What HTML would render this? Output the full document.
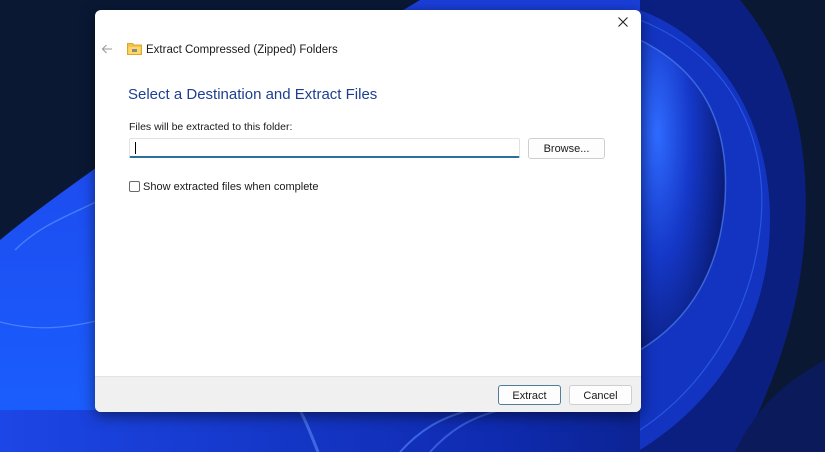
<!DOCTYPE html>
<html><head><meta charset="utf-8"><style>
html,body{margin:0;padding:0;width:825px;height:452px;overflow:hidden;font-family:"Liberation Sans",sans-serif;}
body{background:#0a1834;position:relative;}
#bg{position:absolute;left:0;top:0;}
.dlg{position:absolute;left:95px;top:10px;width:546px;height:402px;background:#fff;border-radius:6px;overflow:hidden;box-shadow:0 4px 14px rgba(0,0,0,.5);}
.foot{position:absolute;left:0;right:0;bottom:0;height:35px;background:#f0f0f0;border-top:1px solid #e3e3e3;}
.btn{position:absolute;height:20px;border:1px solid #cfcfcf;border-radius:3px;background:#fdfdfd;font-size:11px;color:#1a1a1a;text-align:center;line-height:20px;box-sizing:border-box;}
.t{position:absolute;white-space:nowrap;}
</style></head><body>
<svg id="bg" width="825" height="452" viewBox="0 0 825 452">
<defs>
<radialGradient id="gr" cx="0.2" cy="0.3" r="0.8"><stop offset="0" stop-color="#2f6bff"/><stop offset="0.5" stop-color="#1538c8"/><stop offset="1" stop-color="#0a1c78"/></radialGradient>
<linearGradient id="gl" x1="0" y1="0" x2="0" y2="1"><stop offset="0" stop-color="#1d4cf0"/><stop offset="1" stop-color="#1a60ff"/></linearGradient>
<linearGradient id="gb" x1="0" y1="0" x2="1" y2="0"><stop offset="0" stop-color="#1c46e6"/><stop offset="0.6" stop-color="#0f2bb0"/><stop offset="1" stop-color="#081a70"/></linearGradient>
</defs>
<rect width="825" height="452" fill="#0a1834"/>
<path d="M420 0 L825 0 L825 12 L400 12 Z" fill="#1a3ed8"/>
<path d="M0 240 C30 215 65 190 100 165 L100 452 L0 452 Z" fill="url(#gl)"/>
<path d="M15 250 C40 225 70 215 100 200" stroke="#5a8cff" stroke-width="1.5" fill="none" opacity=".7"/>
<path d="M0 322 C30 330 60 330 100 320" stroke="#6a9aff" stroke-width="1.2" fill="none" opacity=".6"/>
<rect x="0" y="410" width="825" height="42" fill="url(#gb)"/>
<path d="M300 410 C310 430 315 445 318 452" stroke="#6a9aff" stroke-width="3" fill="none" opacity=".5"/>
<path d="M400 452 C420 430 440 418 470 410" stroke="#5a8aff" stroke-width="2" fill="none" opacity=".6"/>
<path d="M430 452 C450 430 470 418 500 410" stroke="#5a8aff" stroke-width="2" fill="none" opacity=".5"/>
<rect x="640" y="0" width="185" height="452" fill="#0a1834"/>
<path d="M640 0 L740 0 C790 60 810 140 805 230 C800 320 770 390 740 452 L640 452 Z" fill="#0b1f80"/>
<path d="M640 10 C720 40 770 120 770 220 C770 320 720 400 640 450 Z" fill="#1234c0"/>
<path d="M640 40 C700 70 730 120 725 200 C720 270 690 320 640 350 Z" fill="url(#gr)"/>
<path d="M640 40 C700 70 730 120 725 200 C720 270 690 320 640 350" stroke="#5a8cff" stroke-width="1.5" fill="none" opacity=".6"/>
<path d="M640 20 C740 60 770 150 760 230 C750 320 700 390 640 430" stroke="#3a6aff" stroke-width="1.2" fill="none" opacity=".6"/>
<path d="M735 452 C760 400 790 380 825 360 L825 452 Z" fill="#0a1a5a"/>
</svg>
<div class="dlg">
  <svg style="position:absolute;left:523px;top:7px" width="10" height="10" viewBox="0 0 10 10"><path d="M0.5 0.5 L9.5 9.5 M9.5 0.5 L0.5 9.5" stroke="#222" stroke-width="1.1"/></svg>
  <svg style="position:absolute;left:6px;top:34px" width="12" height="10" viewBox="0 0 12 10"><path d="M11 5 H1.5 M5.5 1 L1.5 5 L5.5 9" stroke="#9a9a9a" stroke-width="1.1" fill="none"/></svg>
  <svg style="position:absolute;left:32px;top:32px" width="15" height="13" viewBox="0 0 15 13"><path d="M0.5 1.5 H5.5 L7 3 H14.5 V12.5 H0.5 Z" fill="#f2c34a" stroke="#d9a72a"/><rect x="1.5" y="5" width="12" height="7" fill="#ffd866"/><rect x="5" y="7" width="5" height="3" fill="#8a8a8a"/></svg>
  <div class="t" style="left:51px;top:34px;font-size:11.5px;color:#1a1a1a">Extract Compressed (Zipped) Folders</div>
  <div class="t" style="left:33px;top:76px;font-size:15px;color:#1e3f8f">Select a Destination and Extract Files</div>
  <div class="t" style="left:34px;top:111px;font-size:10.5px;color:#1a1a1a">Files will be extracted to this folder:</div>
  <div style="position:absolute;left:34px;top:128px;width:391px;height:20px;box-sizing:border-box;border:1px solid #e2e2e2;border-bottom:2px solid #2b6f9a;border-radius:2px"></div>
  <div style="position:absolute;left:40px;top:132px;width:1px;height:12px;background:#000"></div>
  <div class="btn" style="left:433px;top:128px;width:77px;height:21px;line-height:20px">Browse...</div>
  <div style="position:absolute;left:34px;top:171px;width:11px;height:11px;border:1px solid #6a6a6a;border-radius:2px;box-sizing:border-box"></div>
  <div class="t" style="left:48px;top:171px;font-size:11px;color:#1a1a1a">Show extracted files when complete</div>
  <div class="foot">
    <div class="btn" style="left:403px;top:8px;width:63px;border-color:#4f7e99;border-width:1.5px">Extract</div>
    <div class="btn" style="left:474px;top:8px;width:63px">Cancel</div>
  </div>
</div>
</body></html>
